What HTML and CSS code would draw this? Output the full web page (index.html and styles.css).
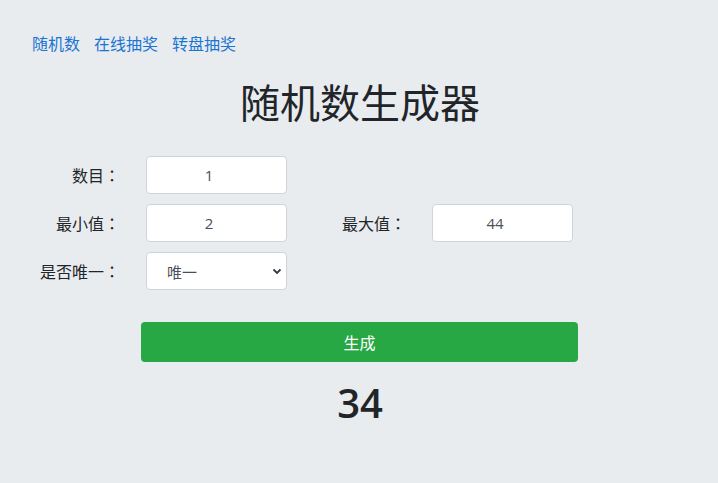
FILE: index.html
```html
<!DOCTYPE html>
<html lang="zh">
<head>
<meta charset="utf-8">
<title>随机数生成器</title>
<link rel="stylesheet" href="styles.css">
</head>
<body>
<nav class="nav">
  <a href="#">随机数</a>
  <a href="#">在线抽奖</a>
  <a href="#">转盘抽奖</a>
</nav>
<h1 class="title">随机数生成器</h1>
<form class="form">
  <label class="label">数目<span class="colon">：</span></label>
  <input class="field" type="text" value="1">
  <span></span><span></span>
  <label class="label">最小值<span class="colon">：</span></label>
  <input class="field" type="text" value="2">
  <label class="label label2">最大值<span class="colon">：</span></label>
  <input class="field" type="text" value="44">
  <label class="label">是否唯一<span class="colon">：</span></label>
  <select class="field select"><option>唯一</option><option>不唯一</option></select>
</form>
<button class="btn" type="button">生成</button>
<div class="result">34</div>
</body>
</html>
```
FILE: styles.css
```css
html, body {
  margin: 0;
  padding: 0;
}
body {
  background: #e9ecef;
  color: #212529;
  font-family: "Noto Sans CJK SC", "Noto Sans", sans-serif;
  font-size: 16px;
  width: 718px;
  height: 483px;
  overflow: hidden;
}
.nav {
  display: flex;
  gap: 14px;
  padding: 31px 0 0 32px;
  line-height: 24px;
}
.nav a {
  color: #1a74d2;
  text-decoration: none;
  font-size: 16px;
}
.title {
  margin: 22px 0 0;
  font-size: 40px;
  font-weight: 400;
  line-height: 48px;
  text-align: center;
  width: 720px;
}
.form {
  display: grid;
  grid-template-columns: 146px 141px 145px 141px;
  grid-auto-rows: 38px;
  row-gap: 10px;
  margin-top: 31px;
}
.label {
  display: flex;
  align-items: center;
  justify-content: flex-end;
  padding-right: 26px;
  font-size: 16px;
  color: #212529;
}
.colon {
  font-family: "Noto Sans CJK TC", "Noto Sans CJK SC", sans-serif;
}
.label2 {
  justify-content: flex-start;
  padding-left: 55px;
  padding-right: 0;
}
.field {
  box-sizing: border-box;
  width: 141px;
  height: 38px;
  border: 1px solid #ced4da;
  border-radius: 4px;
  background: #fff;
  color: #495057;
  font-family: "Open Sans", "Noto Sans CJK SC", sans-serif;
  font-size: 15px;
  text-align: center;
  padding: 0 27px 0 12px;
  outline: none;
}
.select {
  text-align: left;
  appearance: none;
  -webkit-appearance: none;
  padding-left: 20px;
  font-family: "Noto Sans CJK SC", sans-serif;
  background: #fff url("data:image/svg+xml,%3Csvg xmlns='http://www.w3.org/2000/svg' width='10' height='8' viewBox='0 0 10 8'%3E%3Cpath d='M1.5 2.5 L5 6 L8.5 2.5' fill='none' stroke='%23343a40' stroke-width='1.8'/%3E%3C/svg%3E") no-repeat right 4px center;
}
.btn {
  display: block;
  margin: 32px 0 0 141px;
  width: 437px;
  height: 40px;
  border: none;
  border-radius: 4px;
  background: #28a745;
  color: #fff;
  font-family: "Noto Sans CJK SC", sans-serif;
  font-size: 16px;
  padding: 0;
}
.result {
  margin-top: 17px;
  width: 720px;
  text-align: center;
  font-family: "Open Sans", sans-serif;
  font-weight: 600;
  font-size: 40px;
  line-height: 48px;
  color: #212529;
}
```
